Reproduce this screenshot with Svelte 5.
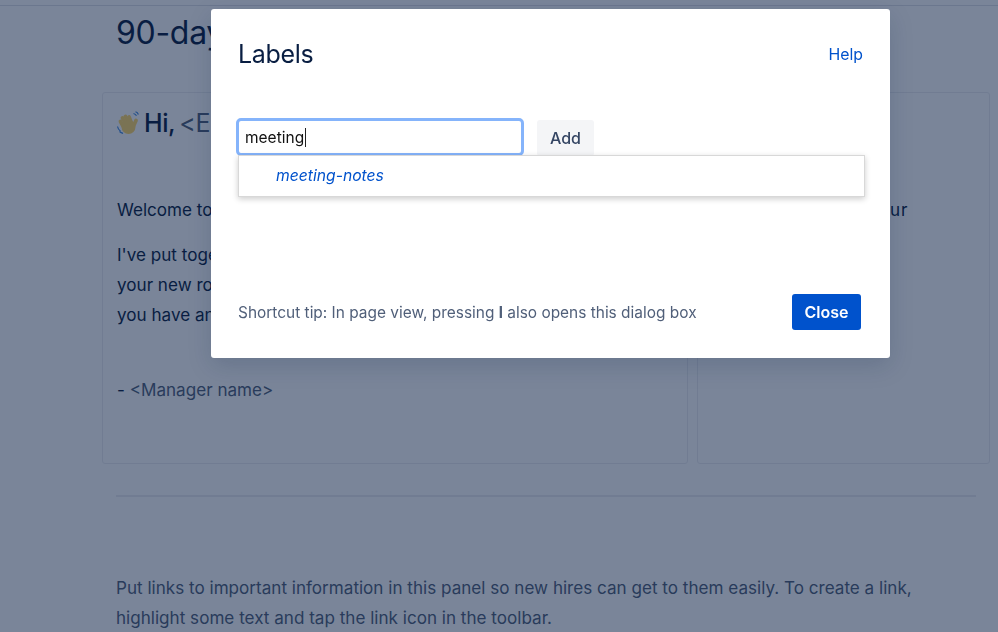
<script>
  let labelText = $state("meeting");
  const suggestions = ["meeting-notes"];
</script>

<div class="page">
  <div class="topline"></div>
  <h1>90-day</h1>

  <div class="panels">
    <section class="panel main">
      <h2>
        <svg class="wave" viewBox="0 0 24 24" width="24" height="24" aria-hidden="true">
          <g stroke="#ffd76a" stroke-width="3.800" stroke-linecap="round" fill="none">
            <path d="M7 15 4.500 10.500" />
            <path d="M9 12 6.500 7" />
            <path d="M12 11 9.500 5.500" />
            <path d="M15 11 13 6" />
            <path d="M17.500 15 20 9.500" />
          </g>
          <circle cx="12.500" cy="16" r="7" fill="#ffd76a" />
          <path d="M1.500 15.500c.4 2 1.400 3.600 3 4.800M3.500 20.500c1 1 2.300 1.600 3.600 1.800M17.500 2.500c1.200.3 2.300 1 3 2.200M19.500 .8c1.200.4 2.300 1.300 2.900 2.600" fill="none" stroke="#3f8ae0" stroke-width="1.200" />
        </svg>
        Hi, <span class="placeholder">&lt;E</span>
      </h2>
      <p class="welcome">Welcome to</p>
      <p class="body">I've put toge<br />your new ro<br />you have an</p>
      <p class="sign">- <span class="placeholder">&lt;Manager name&gt;</span></p>
    </section>
    <section class="panel side">
      <p class="side-text">ur</p>
    </section>
  </div>

  <hr />

  <p class="links">Put links to important information in this panel so new hires can get to them easily. To create a link, highlight some text and tap the link icon in the toolbar.</p>
</div>

<div class="blanket"></div>

<div class="dialog" role="dialog" aria-label="Labels">
  <header>
    <h3>Labels</h3>
    <a href="#help">Help</a>
  </header>

  <div class="form">
    <div class="input-row">
      <div class="input"><span>{labelText}</span><i class="caret"></i></div>
      <button class="add">Add</button>
    </div>
    <ul class="dropdown">
      {#each suggestions as s}
        <li>{s}</li>
      {/each}
    </ul>
  </div>

  <footer>
    <p>Shortcut tip: In page view, pressing <b>l</b> also opens this dialog box</p>
    <button class="close">Close</button>
  </footer>
</div>

<style>
  :global(body) {
    margin: 0;
    font-family: Inter, "Noto Sans", sans-serif;
    color: #172b4d;
    overflow: hidden;
  }

  .page {
    height: 632px;
    overflow: hidden;
    box-sizing: border-box;
    padding: 5px 22px 0 102px;
    background: #fff;
  }

  .topline {
    height: 1px;
    background: #dfe1e6;
    margin: 0 -22px 0 -102px;
  }

  h1 {
    margin: 8px 0 0 14px;
    font-size: 32px;
    line-height: 38px;
    font-weight: 400;
    letter-spacing: -0.3px;
    color: #091e42;
  }

  .panels {
    display: flex;
    gap: 9px;
    margin: 40px -14px 0 0;
  }

  .panel {
    box-sizing: border-box;
    height: 372px;
    border: 1px solid #ebecf0;
    border-radius: 3px;
  }

  .main {
    width: 586px;
    padding: 0 14px;
  }

  .side {
    width: 293px;
  }

  h2 {
    margin: 15px 0 0;
    display: flex;
    align-items: center;
    gap: 4px;
    font-size: 25px;
    line-height: 30px;
    font-weight: 500;
    letter-spacing: -0.4px;
    color: #091e42;
  }

  .wave {
    flex: none;
    margin-left: -1px;
  }

  .placeholder {
    color: #505f79;
    font-weight: 400;
  }

  p {
    font-size: 17.100px;
    line-height: 30px;
    margin: 0;
    color: #091e42;
  }

  .welcome {
    margin-top: 57px;
  }

  .body {
    margin-top: 15px;
  }

  .sign {
    margin-top: 45px;
  }

  .side-text {
    margin: 102px 0 0 192px;
    letter-spacing: 1px;
  }

  hr {
    border: 0;
    height: 2px;
    background: #ebecf0;
    margin: 31px 0 0 14px;
  }

  .links {
    margin: 76px 0 0 14px;
    color: #505f79;
  }

  .blanket {
    position: fixed;
    inset: 0;
    background: rgba(9, 30, 66, 0.54);
  }

  .dialog {
    position: fixed;
    left: 211px;
    top: 9px;
    width: 679px;
    height: 349px;
    box-sizing: border-box;
    padding: 0 27px;
    background: #fff;
    border-radius: 3px;
    box-shadow: 0 8px 24px rgba(9, 30, 66, 0.16);
    display: flex;
    flex-direction: column;
  }

  header {
    display: flex;
    justify-content: space-between;
    align-items: center;
    height: 90px;
  }

  h3 {
    margin: 0;
    font-size: 25px;
    font-weight: 400;
    letter-spacing: -0.3px;
    color: #091e42;
  }

  header a {
    color: #0052cc;
    font-size: 15.800px;
    text-decoration: none;
  }

  .form {
    position: relative;
    margin-top: 19px;
  }

  .input-row {
    display: flex;
    align-items: flex-start;
    gap: 13px;
    margin-left: -2px;
  }

  .input {
    box-sizing: border-box;
    width: 288px;
    height: 38px;
    border: 3px solid #85b4fb;
    border-radius: 5px;
    padding-left: 6px;
    display: flex;
    align-items: center;
    font-size: 15.500px;
    color: #111;
  }

  .caret {
    width: 1px;
    height: 19px;
    margin-left: 1px;
    background: #222;
  }

  .add {
    width: 57px;
    height: 36px;
    margin-top: 2px;
    border: 0;
    border-radius: 3px;
    background: #f4f5f7;
    color: #344563;
    font: 500 16px Inter, sans-serif;
  }

  .dropdown {
    list-style: none;
    margin: 0;
    padding: 0;
    position: absolute;
    left: 0;
    top: 37px;
    width: 627px;
    height: 42px;
    box-sizing: border-box;
    background: #fff;
    border: 1px solid #d8d8d8;
    box-shadow: 0 2px 6px rgba(0, 0, 0, 0.2);
  }

  .dropdown li {
    padding-left: 37px;
    line-height: 40px;
    font-size: 15.700px;
    font-style: italic;
    color: #0052cc;
  }

  footer {
    margin-top: auto;
    height: 64px;
    display: flex;
    justify-content: space-between;
    align-items: flex-start;
    padding-right: 2px;
  }

  footer p {
    margin-top: 4px;
    font-size: 15.450px;
    line-height: 30px;
    color: #505f79;
  }

  .close {
    width: 69px;
    height: 36px;
    border: 0;
    border-radius: 3px;
    background: #0052cc;
    color: #fff;
    font: 600 16px Inter, sans-serif;
  }
</style>
